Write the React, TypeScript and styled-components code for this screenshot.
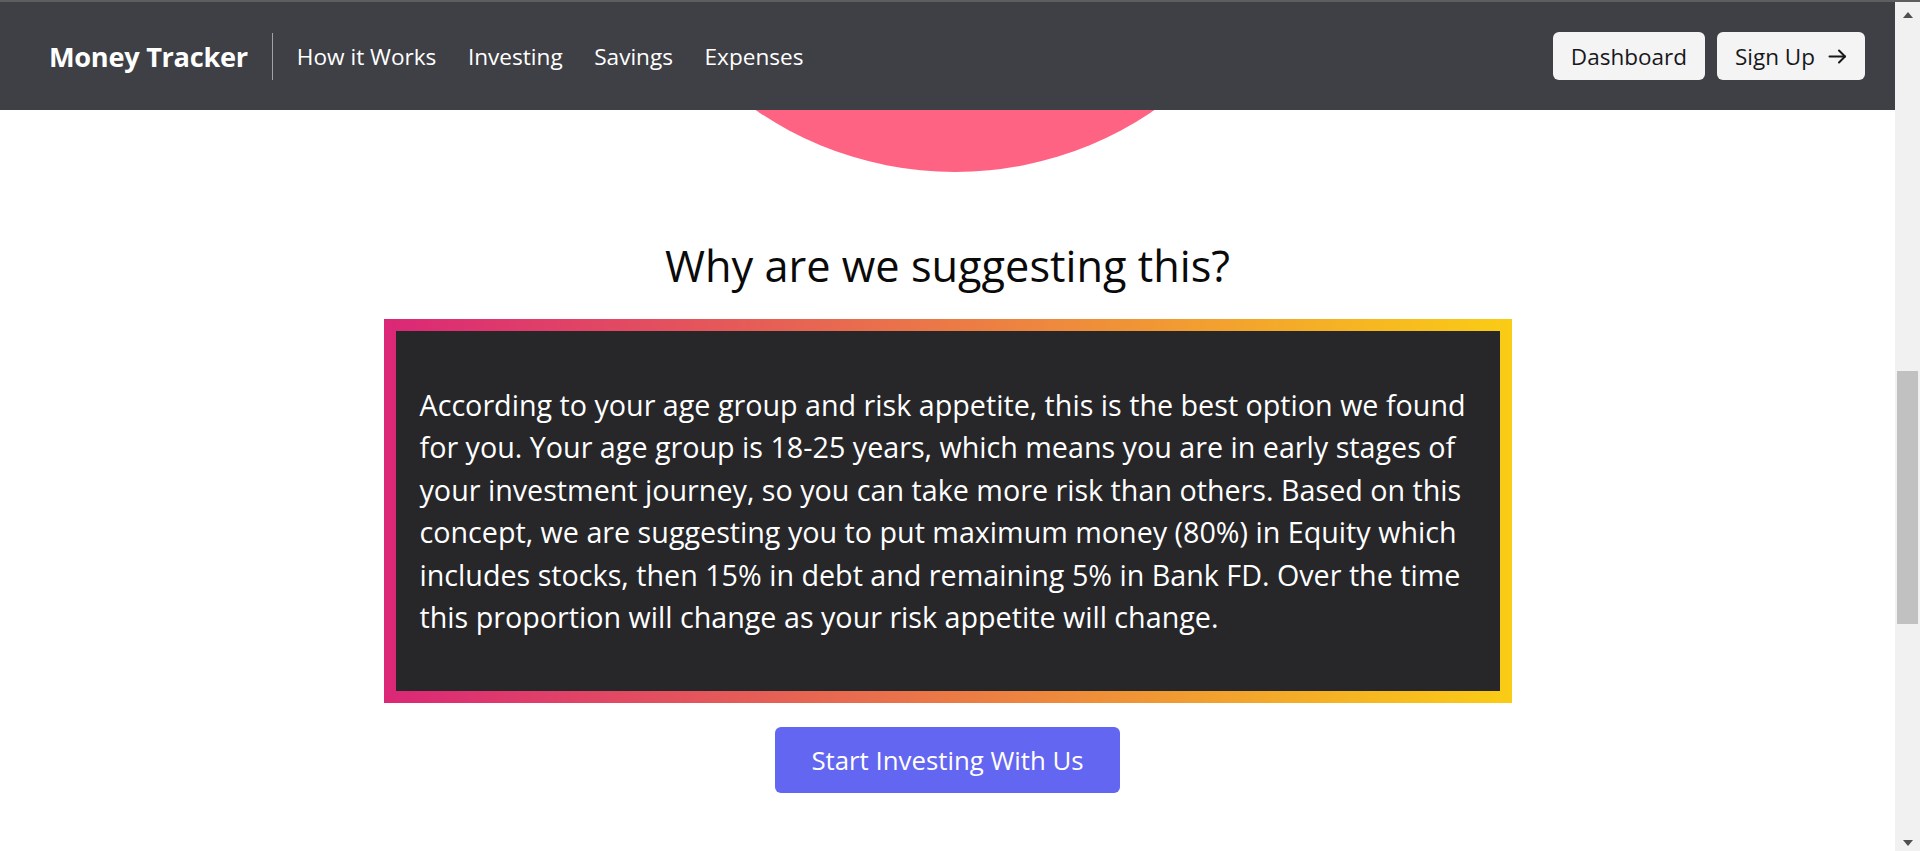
import React from "react";
import styled, { createGlobalStyle } from "styled-components";

const GlobalStyle = createGlobalStyle`
  html, body { margin: 0; padding: 0; height: 100%; overflow: hidden; background: #ffffff; }
  body { font-family: "Open Sans", "Noto Sans", sans-serif; -webkit-font-smoothing: antialiased; }
  * { box-sizing: border-box; }
`;

const Frame = styled.div`
  display: flex;
  flex-direction: column;
  height: 851px;
  width: 1920px;
`;

const WindowEdge = styled.div`
  height: 2px;
  background: #5e5e5e;
  flex: none;
`;

const Viewport = styled.div`
  flex: 1;
  display: flex;
  min-height: 0;
`;

const Page = styled.div`
  flex: 1;
  display: flex;
  flex-direction: column;
  min-width: 0;
`;

const NavBar = styled.nav`
  height: 108px;
  flex: none;
  background: #3f3f46;
  display: flex;
  align-items: center;
  justify-content: space-between;
  padding: 0 30px 0 49px;
`;

const NavLeft = styled.div`
  display: flex;
  align-items: center;
`;

const Brand = styled.a`
  color: #ffffff;
  font-size: 27.2px;
  font-weight: 700;
  letter-spacing: -0.3px;
  text-decoration: none;
`;

const Divider = styled.span`
  width: 1px;
  height: 47px;
  background: #a1a1aa;
  margin: 0 24px 0 24px;
`;

const NavLinks = styled.div`
  display: flex;
  gap: 31.5px;
`;

const NavLink = styled.a`
  color: #ffffff;
  font-size: 22.6px;
  text-decoration: none;
`;

const NavRight = styled.div`
  display: flex;
  gap: 12px;
`;

const NavButton = styled.button`
  height: 48px;
  padding: 0 18px;
  display: flex;
  align-items: center;
  gap: 13px;
  border: none;
  border-radius: 6px;
  background: #f4f4f5;
  color: #18181b;
  font-family: inherit;
  font-size: 22.5px;
`;

const Main = styled.main`
  flex: 1;
  display: flex;
  flex-direction: column;
  align-items: center;
`;

const ChartSlice = styled.svg`
  display: block;
  width: 100%;
  height: 62px;
  flex: none;
`;

const Heading = styled.h2`
  margin: 67px 0 26px;
  font-size: 43.3px;
  line-height: 54px;
  font-weight: 400;
  color: #0a0a0a;
`;

const GradientFrame = styled.div`
  width: 1128px;
  padding: 12px;
  background: linear-gradient(to right, #db2777, #facc15);
`;

const ReasonCard = styled.div`
  background: #27272a;
  padding: 53px 24px 53px;
`;

const ReasonText = styled.p`
  margin: 0;
  color: #ffffff;
  font-size: 28.7px;
  line-height: 42.4px;
`;

const CtaButton = styled.button`
  margin-top: 24px;
  height: 66px;
  padding: 0 36px;
  border: none;
  border-radius: 6px;
  background: #6366f1;
  color: #ffffff;
  font-family: inherit;
  font-size: 25.8px;
`;

const ScrollTrack = styled.div`
  width: 25px;
  flex: none;
  background: #f1f1f1;
  display: flex;
  flex-direction: column;
`;

const ArrowCell = styled.div<{ $h: number }>`
  height: ${(p) => p.$h}px;
  display: flex;
  align-items: center;
  justify-content: center;
  flex: none;
`;

const Triangle = styled.span<{ $down?: boolean }>`
  width: 0;
  height: 0;
  border-left: 5.5px solid transparent;
  border-right: 5.5px solid transparent;
  ${(p) =>
    p.$down
      ? "border-top: 6px solid #505050;"
      : "border-bottom: 6px solid #505050;"}
`;

const TrackArea = styled.div`
  flex: 1;
`;

const Thumb = styled.div`
  margin: 344px 2px 0;
  height: 253px;
  background: #c1c1c1;
`;

const ArrowRightIcon = () => (
  <svg width="19" height="15" viewBox="0 0 19 15" fill="none" stroke="#18181b" strokeWidth="2" strokeLinecap="round" strokeLinejoin="round">
    <path d="M1.5 7.5H17" />
    <path d="M11 1.5L17 7.5L11 13.5" />
  </svg>
);

export default function App() {
  return (
    <>
      <GlobalStyle />
      <Frame>
        <WindowEdge />
        <Viewport>
          <Page>
            <NavBar>
              <NavLeft>
                <Brand href="#">Money Tracker</Brand>
                <Divider />
                <NavLinks>
                  <NavLink href="#">How it Works</NavLink>
                  <NavLink href="#">Investing</NavLink>
                  <NavLink href="#">Savings</NavLink>
                  <NavLink href="#">Expenses</NavLink>
                </NavLinks>
              </NavLeft>
              <NavRight>
                <NavButton>Dashboard</NavButton>
                <NavButton>
                  Sign Up
                  <ArrowRightIcon />
                </NavButton>
              </NavRight>
            </NavBar>
            <Main>
              <ChartSlice viewBox="0 0 1895 62" preserveAspectRatio="none">
                <circle cx="955" cy="-290" r="352" fill="#ff6384" />
              </ChartSlice>
              <Heading>Why are we suggesting this?</Heading>
              <GradientFrame>
                <ReasonCard>
                  <ReasonText>
                    According to your age group and risk appetite, this is the best option we found for you. Your age
                    group is 18-25 years, which means you are in early stages of your investment journey, so you can
                    take more risk than others. Based on this concept, we are suggesting you to put maximum money (80%)
                    in Equity which includes stocks, then 15% in debt and remaining 5% in Bank FD. Over the time this
                    proportion will change as your risk appetite will change.
                  </ReasonText>
                </ReasonCard>
              </GradientFrame>
              <CtaButton>Start Investing With Us</CtaButton>
            </Main>
          </Page>
          <ScrollTrack>
            <ArrowCell $h={25}>
              <Triangle />
            </ArrowCell>
            <TrackArea>
              <Thumb />
            </TrackArea>
            <ArrowCell $h={17}>
              <Triangle $down />
            </ArrowCell>
          </ScrollTrack>
        </Viewport>
      </Frame>
    </>
  );
}
